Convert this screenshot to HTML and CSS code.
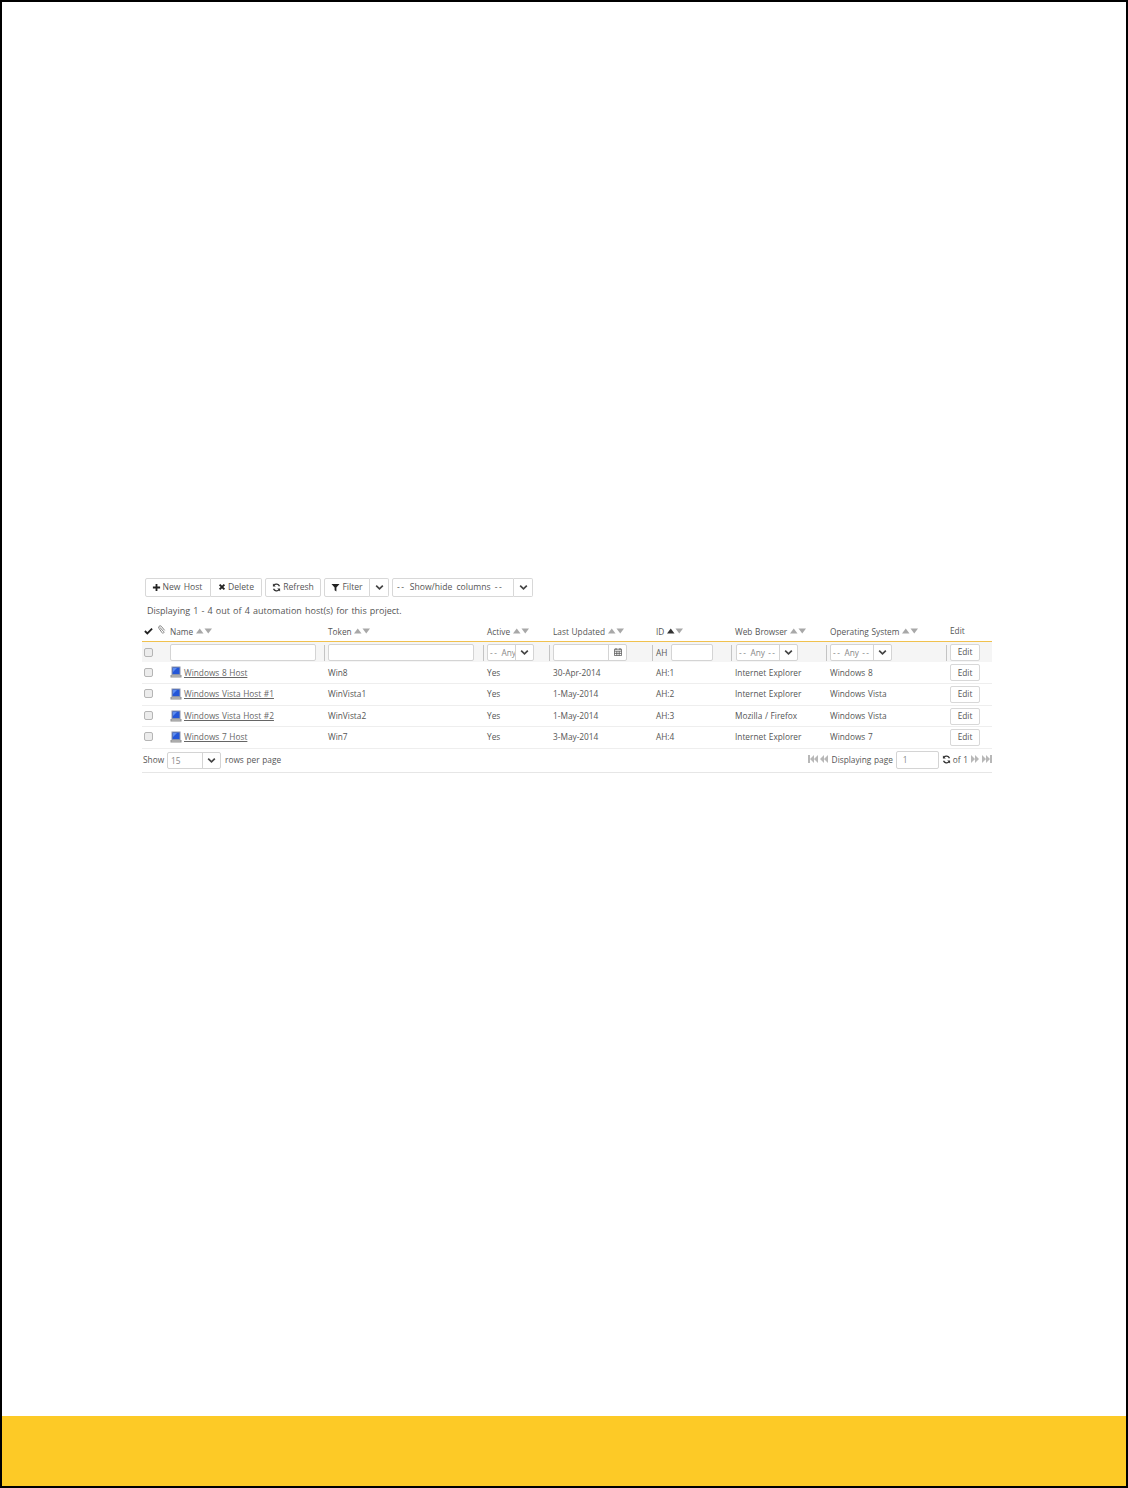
FILE: index.html
```html
<!DOCTYPE html>
<html lang="en">
<head>
<meta charset="utf-8">
<title>Automation Hosts</title>
<link rel="stylesheet" href="styles.css">
</head>
<body>
<svg class="defs" width="0" height="0" aria-hidden="true">
  <symbol id="chev" viewBox="0 0 10 8"><path d="M1.2 1.8 5 5.6 8.8 1.8" fill="none" stroke="#444" stroke-width="1.9"/></symbol>
  <symbol id="sort" viewBox="0 0 16 6"><path d="M0 5.5 3.75 .5 7.5 5.5Z" fill="#a8a8a8"/><path d="M8.5 .5H16L12.25 5.5Z" fill="#a8a8a8"/></symbol>
  <symbol id="sortup" viewBox="0 0 16 6"><path d="M0 5.5 3.75 .5 7.5 5.5Z" fill="#333"/><path d="M8.5 .5H16L12.25 5.5Z" fill="#a8a8a8"/></symbol>
  <symbol id="laptop" viewBox="0 0 12 12"><path d="M1.5 .5h9v8.5h-9Z" fill="#8a93a8"/><path d="M2.5 1.5h7v6.5h-7Z" fill="#2456d8"/><path d="M3 2h4L3 6Z" fill="#5d8df0"/><path d="M.5 9h11v2.5H.5Z" fill="#8f8f8f"/><path d="M1.5 9.5h9v1h-9Z" fill="#c8c8c8"/></symbol>
  <symbol id="cal" viewBox="0 0 10 10"><path d="M.5 1.5h9v8h-9ZM.5 4h9M3.5 4v5.5M6.5 4v5.5M.5 6.7h9M2.5 0v2.5M7.5 0v2.5" fill="none" stroke="#555"/></symbol>
  <symbol id="refresh" viewBox="0 0 10 10"><path d="M8.3 3.6A3.7 3.7 0 0 0 2 2.6M1.7 6.4A3.7 3.7 0 0 0 8 7.4" fill="none" stroke="#333" stroke-width="1.5"/><path d="M1 .6v3.2h3.2ZM9 9.4V6.2H5.8Z" fill="#333"/></symbol>
  <symbol id="first" viewBox="0 0 10 8"><path d="M0 0h2v8H0ZM6 0v8L2 4ZM10 0v8L6 4Z" fill="#b8b8b8"/></symbol>
  <symbol id="prev" viewBox="0 0 8 8"><path d="M4 0v8L0 4ZM8 0v8L4 4Z" fill="#b8b8b8"/></symbol>
  <symbol id="next" viewBox="0 0 8 8"><path d="M0 0v8l4-4ZM4 0v8l4-4Z" fill="#b8b8b8"/></symbol>
  <symbol id="last" viewBox="0 0 10 8"><path d="M0 0v8l4-4ZM4 0v8l4-4ZM8 0h2v8H8Z" fill="#b8b8b8"/></symbol>
</svg>
<div class="page">
  <main class="main">
    <div class="panel">
      <div class="toolbar">
        <div class="group">
          <button class="btn b-new"><svg class="ic" viewBox="0 0 10 10"><path d="M5 1v8M1 5h8" stroke="#222" stroke-width="2"/></svg>New Host</button>
          <button class="btn b-del"><svg class="ic ic-s" viewBox="0 0 10 10"><path d="M2 2l6 6M8 2l-6 6" stroke="#222" stroke-width="2.4"/></svg>Delete</button>
        </div>
        <div class="group"><button class="btn b-ref"><svg class="ic"><use href="#refresh"/></svg>Refresh</button></div>
        <div class="group">
          <button class="btn b-fil"><svg class="ic" viewBox="0 0 10 10"><path d="M.5 1h9L6 5v4.5L4 8V5Z" fill="#222"/></svg>Filter</button>
          <button class="btn b-chev"><svg class="chev"><use href="#chev"/></svg></button>
        </div>
        <div class="group">
          <button class="btn b-show"><span class="dd">--</span> Show/hide columns <span class="dd">--</span></button>
          <button class="btn b-chev"><svg class="chev"><use href="#chev"/></svg></button>
        </div>
      </div>
      <p class="summary">Displaying 1 - 4 out of 4 automation host(s) for this project.</p>
      <table class="grid">
        <colgroup>
          <col class="c1"><col class="c2"><col class="c3"><col class="c4"><col class="c5"><col class="c6"><col class="c7"><col class="c8"><col class="c9">
        </colgroup>
        <thead>
          <tr class="heads">
            <th class="marks"><svg class="mark" viewBox="0 0 10 8"><path d="M1 4l2.7 2.7L9 1.3" fill="none" stroke="#222" stroke-width="2"/></svg><svg class="clip" viewBox="0 0 8 10"><path d="M1.5 2.5 6 7.5a1 1 0 0 1-2 1L.8 4a1.6 1.6 0 0 1 2.4-2.6L7 6" fill="none" stroke="#777"/></svg></th>
            <th>Name <svg class="sort"><use href="#sort"/></svg></th>
            <th>Token <svg class="sort"><use href="#sort"/></svg></th>
            <th>Active <svg class="sort"><use href="#sort"/></svg></th>
            <th>Last Updated <svg class="sort"><use href="#sort"/></svg></th>
            <th>ID <svg class="sort"><use href="#sortup"/></svg></th>
            <th>Web Browser <svg class="sort"><use href="#sort"/></svg></th>
            <th>Operating System <svg class="sort"><use href="#sort"/></svg></th>
            <th class="edit-head">Edit</th>
          </tr>
        </thead>
        <tbody>
          <tr class="filters">
            <td class="chk-cell"><span class="chk"></span></td>
            <td class="sep"><span class="field f-text"></span></td>
            <td class="sep"><span class="field f-text"></span></td>
            <td class="sep"><span class="field f-active"><span class="val dash"><span class="dd">--</span> Any</span><span class="drop"><svg class="chev"><use href="#chev"/></svg></span></span></td>
            <td class="sep"><span class="field f-date"><span class="val"></span><span class="drop"><svg class="cal"><use href="#cal"/></svg></span></span></td>
            <td class="sep"><span class="idf">AH<span class="field f-id"></span></span></td>
            <td class="sep"><span class="field f-any f-web"><span class="val dash"><span class="dd">--</span> Any <span class="dd">--</span></span><span class="drop"><svg class="chev"><use href="#chev"/></svg></span></span></td>
            <td class="sep"><span class="field f-any"><span class="val dash"><span class="dd">--</span> Any <span class="dd">--</span></span><span class="drop"><svg class="chev"><use href="#chev"/></svg></span></span></td>
            <td class="sep"><button class="btn edit">Edit</button></td>
          </tr>
          <tr class="row">
            <td class="chk-cell"><span class="chk"></span></td>
            <td><span class="name"><svg class="laptop"><use href="#laptop"/></svg><a href="#" class="link">Windows 8 Host</a></span></td>
            <td>Win8</td><td>Yes</td><td>30-Apr-2014</td><td>AH:1</td><td>Internet Explorer</td><td>Windows 8</td>
            <td class="act"><button class="btn edit">Edit</button></td>
          </tr>
          <tr class="row">
            <td class="chk-cell"><span class="chk"></span></td>
            <td><span class="name"><svg class="laptop"><use href="#laptop"/></svg><a href="#" class="link">Windows Vista Host #1</a></span></td>
            <td>WinVista1</td><td>Yes</td><td>1-May-2014</td><td>AH:2</td><td>Internet Explorer</td><td>Windows Vista</td>
            <td class="act"><button class="btn edit">Edit</button></td>
          </tr>
          <tr class="row">
            <td class="chk-cell"><span class="chk"></span></td>
            <td><span class="name"><svg class="laptop"><use href="#laptop"/></svg><a href="#" class="link">Windows Vista Host #2</a></span></td>
            <td>WinVista2</td><td>Yes</td><td>1-May-2014</td><td>AH:3</td><td>Mozilla / Firefox</td><td>Windows Vista</td>
            <td class="act"><button class="btn edit">Edit</button></td>
          </tr>
          <tr class="row">
            <td class="chk-cell"><span class="chk"></span></td>
            <td><span class="name"><svg class="laptop"><use href="#laptop"/></svg><a href="#" class="link">Windows 7 Host</a></span></td>
            <td>Win7</td><td>Yes</td><td>3-May-2014</td><td>AH:4</td><td>Internet Explorer</td><td>Windows 7</td>
            <td class="act"><button class="btn edit">Edit</button></td>
          </tr>
        </tbody>
      </table>
      <div class="pager">
        <div class="pager-side">
          <span>Show</span>
          <span class="field f-rows"><span class="val">15</span><span class="drop"><svg class="chev"><use href="#chev"/></svg></span></span>
          <span>rows per page</span>
        </div>
        <div class="pager-nav">
          <svg class="nav"><use href="#first"/></svg>
          <svg class="nav nav-s nav-prev"><use href="#prev"/></svg>
          <span>Displaying page</span>
          <span class="field f-page"><span class="val">1</span></span>
          <svg class="ic ic-page"><use href="#refresh"/></svg>
          <span class="of">of 1</span>
          <svg class="nav nav-s nav-next"><use href="#next"/></svg>
          <svg class="nav nav-last"><use href="#last"/></svg>
        </div>
      </div>
    </div>
  </main>
  <footer class="footer"></footer>
</div>
</body>
</html>
```

FILE: styles.css
```css
* { box-sizing: border-box; }
html, body { margin: 0; padding: 0; }
body { font-family: "Open Sans", sans-serif; font-size: 8.3px; word-spacing: .5px; color: #555; background: #fff; }
.defs { position: absolute; }
.page { width: 1128px; height: 1488px; border: 2px solid #000; display: flex; flex-direction: column; }
.main { flex: 1; padding: 576px 0 0 140px; background: #fff; }
.footer { height: 70px; background: #fdca26; }
.panel { width: 850px; }

.toolbar { display: flex; gap: 3px; margin-left: 3px; height: 19px; font-size: 8.6px; word-spacing: 1px; }
.group { display: flex; }
.btn { font: inherit; word-spacing: inherit; color: #555; background: #fff; border: 1px solid #d8d8d8; border-radius: 2px; padding: 0 0 1px; height: 19px; display: flex; align-items: center; justify-content: center; white-space: nowrap; }
.group .btn + .btn { border-left: 0; border-radius: 0 2px 2px 0; }
.b-new { width: 66px; padding-right: 2px; border-radius: 2px 0 0 2px; }
.b-del { width: 51px; }
.b-ref { width: 56px; }
.b-fil { width: 46px; border-radius: 2px 0 0 2px; }
.b-chev { width: 19px; }
.b-show { width: 122px; word-spacing: 2px; justify-content: flex-start; padding-left: 4px; white-space: pre; border-radius: 2px 0 0 2px; }
.dd { letter-spacing: 1.5px; }
.ic { width: 9px; height: 9px; margin-right: 2px; flex: none; }
.ic-s { width: 8px; height: 8px; }
.chev { width: 9px; height: 7px; display: block; }

.summary { margin: 0; padding-left: 5px; height: 25px; line-height: 27px; font-size: 9px; word-spacing: .8px; }

.grid { width: 850px; border-collapse: collapse; table-layout: fixed; }
.c1 { width: 25px; } .c2 { width: 158px; } .c3 { width: 159px; } .c4 { width: 66px; }
.c5 { width: 103px; } .c6 { width: 79px; } .c7 { width: 95px; } .c8 { width: 120px; } .c9 { width: 45px; }
.grid th { text-align: left; font-weight: 400; padding: 0 0 0 3px; height: 19px; border-bottom: 1px solid #f0c14e; white-space: nowrap; vertical-align: middle; }
.grid th.marks { padding-left: 2px; }
.grid td { padding: 0 0 0 3px; white-space: nowrap; }
.grid .edit-head { padding-bottom: 2px; }
.mark { width: 9px; height: 8px; vertical-align: 0; }
.clip { width: 8px; height: 9px; margin-left: 5px; vertical-align: 1px; }
.sort { width: 16px; height: 6px; vertical-align: 1px; }

.filters { background: #f5f5f5; }
.filters td { height: 21px; padding-top: 1px; }
.filters td.sep { position: relative; }
.filters td.sep::before { content: ""; position: absolute; left: -1px; top: 3px; height: 16px; width: 1px; background: #c4c4c4; }
.filters td.sep:nth-child(2)::before { display: none; }
.filters td.chk-cell { padding-top: 2px; }
.row { border-bottom: 1px solid #eee; }
.row:nth-child(even) td { height: 21px; }
.row:nth-child(odd) td { height: 22px; padding-bottom: 1px; }
.row:nth-child(odd) td.act { padding-bottom: 0; }
.row:nth-child(even) td.act { padding-top: 1px; }
.chk-cell { padding-left: 2px !important; }
.chk { display: block; width: 9px; height: 9px; border: 1px solid #b5b5b5; border-radius: 2px; background: #ececec; }

.field { display: flex; height: 17px; border: 1px solid #d4d4d4; border-radius: 2px; background: #fff; color: #888; align-items: stretch; }
.f-text { width: 146px; }
.f-active { width: 47px; }
.f-date { width: 74px; }
.f-any { width: 62px; }
.f-web { margin-left: 1px; }
.f-id { width: 42px; margin-left: 4px; }
.f-rows { width: 54px; height: 17px; margin: 2px 4px 0 3px; }
.f-page { width: 43px; height: 18px; margin: 2px 3px 0; }
.idf { display: flex; align-items: center; }
.val { flex: 1; min-width: 0; padding-left: 3px; line-height: 15px; overflow: hidden; white-space: nowrap; }
.dash { word-spacing: 1px; padding-left: 2px; }
.f-page .val { padding-left: 6px; line-height: 16px; }
.drop { flex: none; width: 18px; border-left: 1px solid #d4d4d4; display: flex; align-items: center; justify-content: center; }
.cal { width: 8px; height: 8px; }

.edit { width: 30px; height: 17px; }
.link { color: #666; text-decoration: underline; }
.name { display: flex; align-items: center; }
.laptop { width: 12px; height: 12px; margin-right: 2px; flex: none; }

.pager { display: flex; justify-content: space-between; align-items: center; height: 24px; border-bottom: 1px solid #e6e6e6; padding: 0 0 2px 1px; }
.pager-side, .pager-nav { display: flex; align-items: center; }
.nav { width: 10px; height: 8px; margin-right: 2px; flex: none; }
.nav-s { width: 8px; }
.nav-prev { margin-right: 4px; }
.nav-next { margin: 0 3px; }
.nav-last { margin-right: 0; }
.ic-page { margin-right: 2px; }
```
